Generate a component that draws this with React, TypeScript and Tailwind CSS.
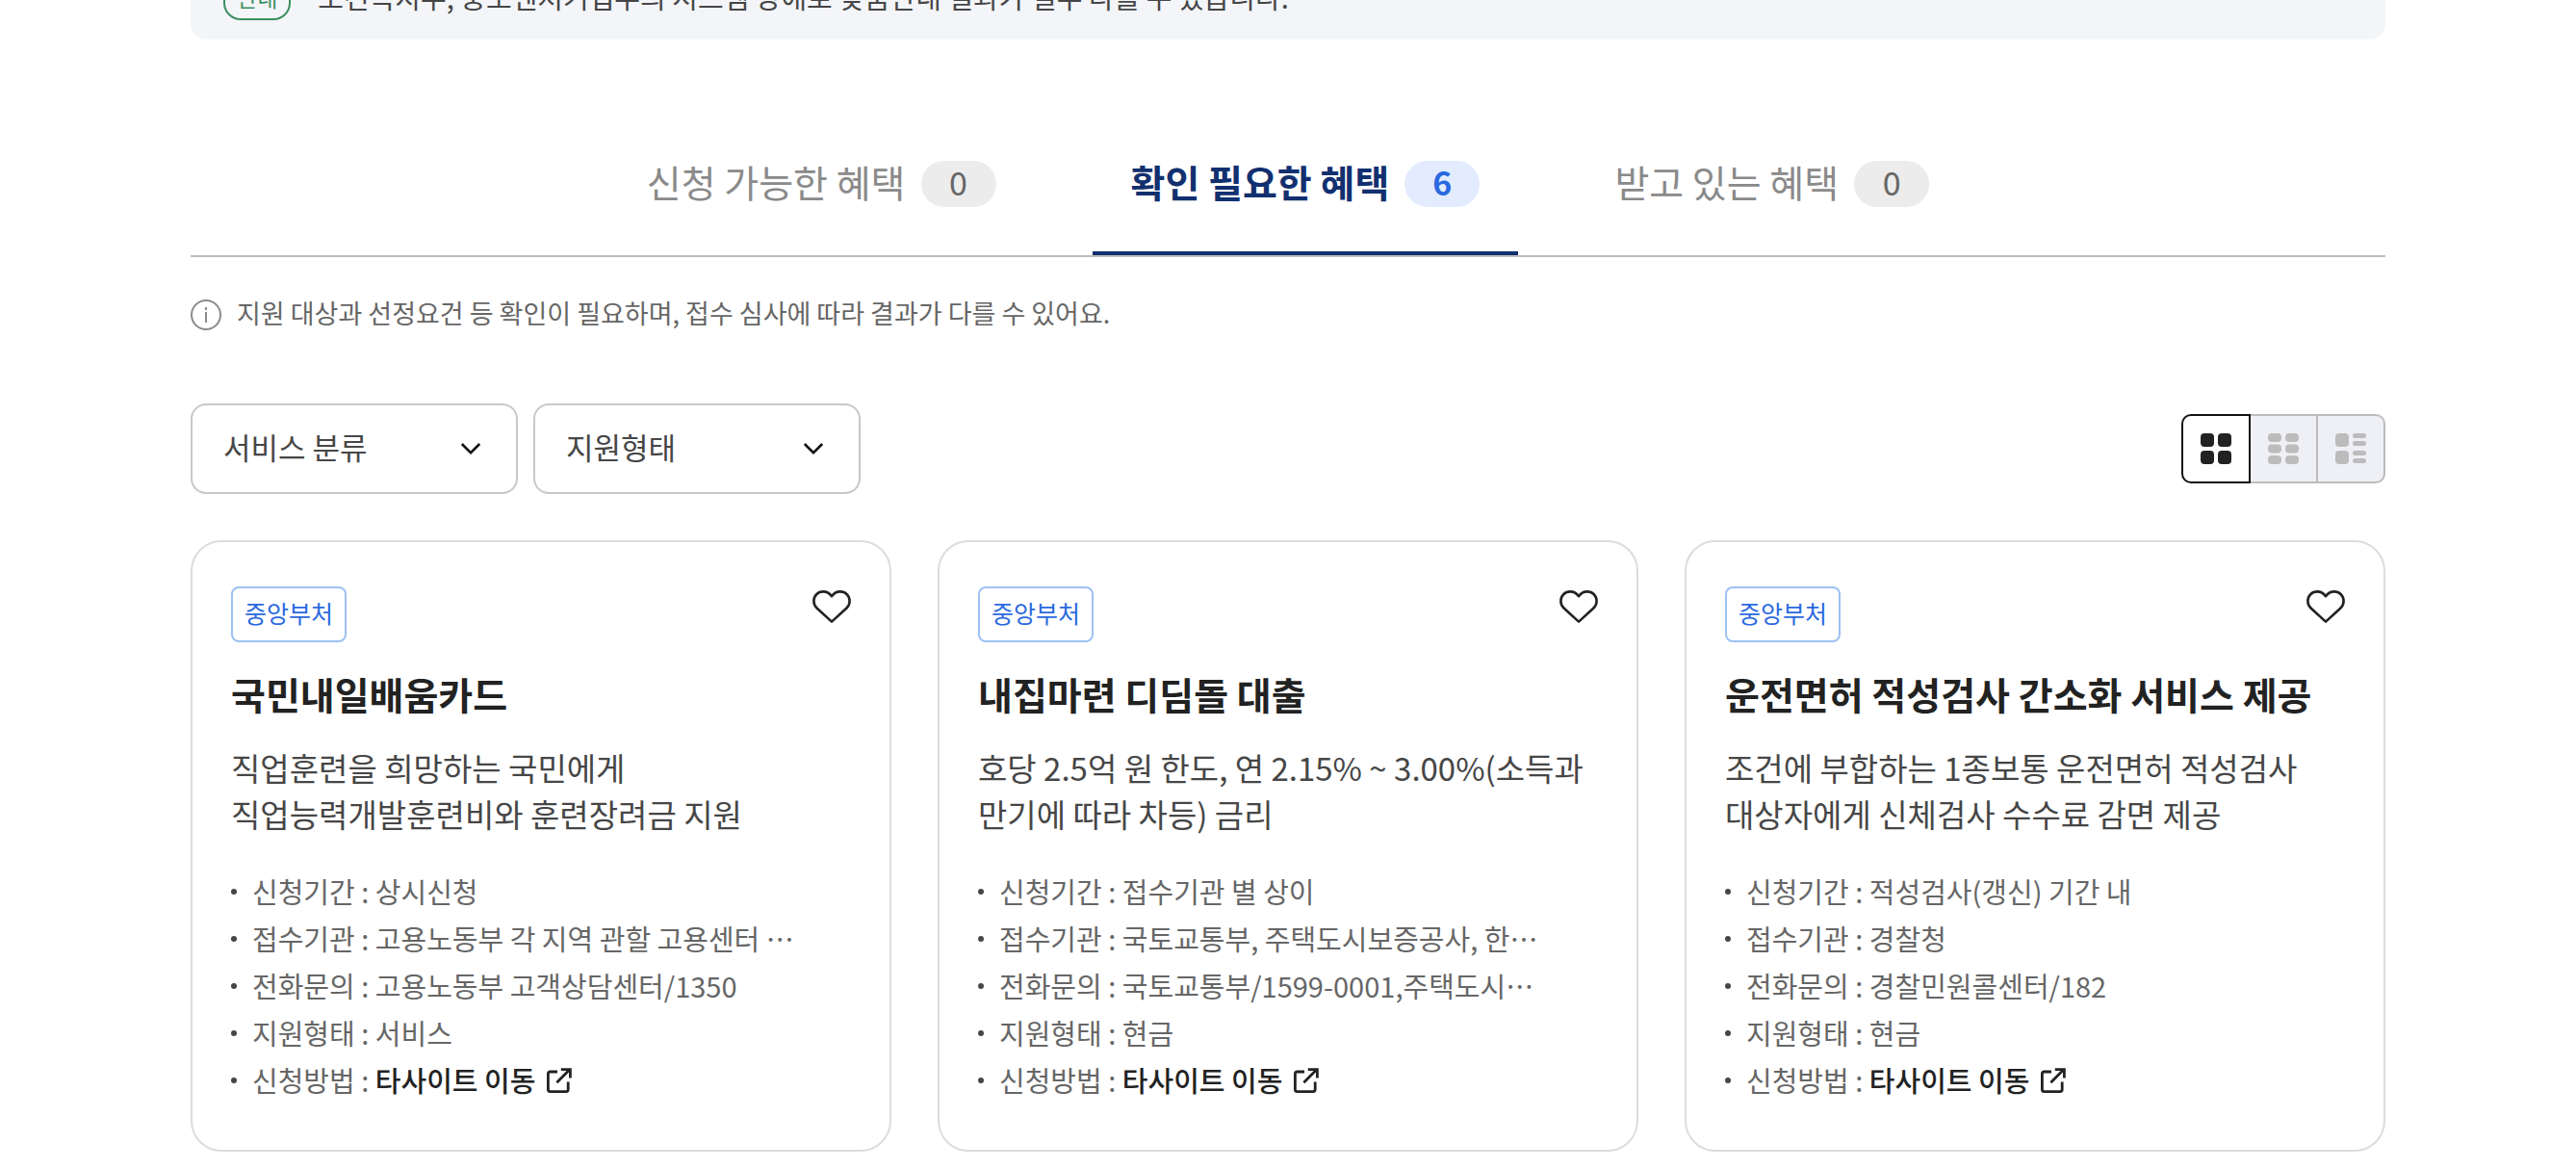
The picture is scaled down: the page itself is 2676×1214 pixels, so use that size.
import React, { useState } from 'react';

const tabs = [
    { id: 'available', label: '신청 가능한 혜택', count: 0 },
    { id: 'check', label: '확인 필요한 혜택', count: 6 },
    { id: 'receiving', label: '받고 있는 혜택', count: 0 },
];

const filters = [
    { id: 'category', label: '서비스 분류' },
    { id: 'supportType', label: '지원형태' },
];

const benefits = [
    {
        id: 1,
        org: '중앙부처',
        title: '국민내일배움카드',
        desc: '직업훈련을 희망하는 국민에게 직업능력개발훈련비와 훈련장려금 지원',
        period: '상시신청',
        agency: '고용노동부 각 지역 관할 고용센터 …',
        phone: '고용노동부 고객상담센터/1350',
        type: '서비스',
    },
    {
        id: 2,
        org: '중앙부처',
        title: '내집마련 디딤돌 대출',
        desc: '호당 2.5억 원 한도, 연 2.15% ~ 3.00%(소득과 만기에 따라 차등) 금리',
        period: '접수기관 별 상이',
        agency: '국토교통부, 주택도시보증공사, 한…',
        phone: '국토교통부/1599-0001,주택도시…',
        type: '현금',
    },
    {
        id: 3,
        org: '중앙부처',
        title: '운전면허 적성검사 간소화 서비스 제공',
        desc: '조건에 부합하는 1종보통 운전면허 적성검사 대상자에게 신체검사 수수료 감면 제공',
        period: '적성검사(갱신) 기간 내',
        agency: '경찰청',
        phone: '경찰민원콜센터/182',
        type: '현금',
    },
];

function InfoIcon() {
    return (
        <svg className="mt-1 w-8 h-8 shrink-0 text-[#8a8a8a]" viewBox="0 0 32 32" fill="none" stroke="currentColor" aria-hidden="true">
            <circle cx="16" cy="16" r="15" strokeWidth="2" />
            <path d="M16 13v11" strokeWidth="2" />
            <path d="M16 8v3" strokeWidth="2" />
        </svg>
    );
}

function HeartIcon() {
    return (
        <svg className="w-10 h-[34px]" viewBox="0 0 40 34" fill="none" stroke="currentColor" strokeWidth="2.6" strokeLinejoin="round" aria-hidden="true">
            <path d="M20 6.2C17.6 2.9 14.6 1.4 11.2 1.4C5.6 1.4 1.4 5.7 1.4 11.2C1.4 14.4 2.6 16.6 4.8 18.7L20 32.6L35.2 18.7C37.4 16.6 38.6 14.4 38.6 11.2C38.6 5.7 34.4 1.4 28.8 1.4C25.4 1.4 22.4 2.9 20 6.2Z" />
        </svg>
    );
}

function ExternalIcon() {
    return (
        <svg className="w-[26px] h-[26px]" viewBox="0 0 26 26" fill="none" stroke="currentColor" strokeWidth="2.8" aria-hidden="true">
            <path d="M11 4H3.4A2 2 0 0 0 1.4 6V22.6A2 2 0 0 0 3.4 24.6H20.2A2 2 0 0 0 22.2 22.6V14.4" />
            <path d="M10.4 15.2L24 1.6M14.8 1.6H24.4V10.6" />
        </svg>
    );
}

function ChevronIcon() {
    return (
        <svg className="pointer-events-none absolute right-[38px] top-1/2 -translate-y-1/2 w-[22px] h-[14px] text-[#111]" viewBox="0 0 22 14" fill="none" stroke="currentColor" strokeWidth="2.5" aria-hidden="true">
            <path d="M1.8 2L11 11.2L20.2 2" />
        </svg>
    );
}

const views = [
    {
        id: 'grid',
        label: '바둑판형',
        icon: (
            <svg className="w-8 h-8" viewBox="0 0 32 32" fill="currentColor" aria-hidden="true">
                <rect width="14" height="14" rx="4" />
                <rect x="18" width="14" height="14" rx="4" />
                <rect y="18" width="14" height="14" rx="4" />
                <rect x="18" y="18" width="14" height="14" rx="4" />
            </svg>
        ),
    },
    {
        id: 'compact',
        label: '간략형',
        icon: (
            <svg className="w-8 h-8" viewBox="0 0 32 32" fill="currentColor" aria-hidden="true">
                <rect width="14" height="9" rx="4" />
                <rect x="18" width="14" height="9" rx="4" />
                <rect y="11.5" width="14" height="9" rx="4" />
                <rect x="18" y="11.5" width="14" height="9" rx="4" />
                <rect y="23" width="14" height="9" rx="4" />
                <rect x="18" y="23" width="14" height="9" rx="4" />
            </svg>
        ),
    },
    {
        id: 'list',
        label: '목록형',
        icon: (
            <svg className="w-8 h-8" viewBox="0 0 32 32" fill="currentColor" aria-hidden="true">
                <rect width="14" height="14" rx="4" />
                <rect y="18" width="14" height="14" rx="4" />
                <rect x="18" width="14" height="5" rx="2.5" />
                <rect x="18" y="8" width="14" height="5" rx="2.5" />
                <rect x="18" y="18" width="14" height="5" rx="2.5" />
                <rect x="18" y="26" width="14" height="5" rx="2.5" />
            </svg>
        ),
    },
];

function Row({ label, children }: { label: string; children: React.ReactNode }) {
    return (
        <li className="flex items-center gap-4">
            <span className="w-[6px] h-[6px] shrink-0 rounded-full bg-[#464646]" />
            <span className="whitespace-nowrap">
                {label} : {children}
            </span>
        </li>
    );
}

function BenefitCard({ item }: { item: any }) {
    return (
        <article className="rounded-[32px] border-2 border-[#dcdcdc] bg-white px-10 pt-[46px] pb-12">
            <div className="flex items-start justify-between">
                <span className="rounded-lg border-2 border-[#9dc1f3] px-3 pb-1 text-[25px] leading-[50px] text-[#2a69e0]">
                    {item.org}
                </span>
                <button type="button" aria-label="관심 서비스 등록" className="mt-1 text-[#222]">
                    <HeartIcon />
                </button>
            </div>
            <h3 className="mt-6 text-[39px] leading-[58px] font-bold text-[#222]">{item.title}</h3>
            <p className="mt-6 text-[33px] leading-[48px] text-[#464646] break-keep">{item.desc}</p>
            <ul className="mt-8 text-[29px] leading-[49px] text-[#666]">
                <Row label="신청기간">{item.period}</Row>
                <Row label="접수기관">{item.agency}</Row>
                <Row label="전화문의">{item.phone}</Row>
                <Row label="지원형태">{item.type}</Row>
                <Row label="신청방법">
                    <a href="#" className="inline-flex items-center gap-3 font-medium text-[#222]">
                        타사이트 이동
                        <ExternalIcon />
                    </a>
                </Row>
            </ul>
        </article>
    );
}

export default function App() {
    const [activeTab, setActiveTab] = useState('check');
    const [view, setView] = useState('grid');

    return (
        <div className="overflow-hidden bg-white font-['Noto_Sans_CJK_KR',sans-serif]">
            <main className="mx-auto w-full max-w-[2280px] pb-4">
                {/* Notice */}
                <div className="-mt-[47px] flex h-[88px] items-center gap-[28px] rounded-2xl bg-[#f3f5f9] pl-[34px]">
                    <span className="rounded-[18px] border-2 border-[#3c8f60] px-3 text-[23px] leading-[44px] text-[#3c8f60]">안내</span>
                    <p className="text-[29px] text-[#464646]">
                        보건복지부, 중소벤처기업부의 시스템 장애로 맞춤안내 결과가 일부 다를 수 있습니다.
                    </p>
                </div>

                {/* Tabs */}
                <div role="tablist" className="mt-[86px] flex justify-center gap-[60px] border-b-2 border-[#bdbdbd]">
                    {tabs.map((tab) => {
                        const active = tab.id === activeTab;
                        return (
                            <button
                                key={tab.id}
                                type="button"
                                role="tab"
                                aria-selected={active}
                                onClick={() => setActiveTab(tab.id)}
                                className={`flex items-start gap-4 border-b-4 px-10 pt-10 pb-[46px] text-[39px] leading-[42px] ${active ? 'border-[#12306f] font-bold text-[#12306f]' : 'border-transparent text-[#8a8a8a]'}`}
                            >
                                {tab.label}
                                <span
                                    className={`w-[78px] h-12 rounded-full text-center text-[34px] leading-[44px] ${active ? 'bg-[#e3ecff] font-bold text-[#2a69e0]' : 'bg-[#ececec] text-[#666]'}`}
                                >
                                    {tab.count}
                                </span>
                            </button>
                        );
                    })}
                </div>

                <div className="mt-10 flex items-start gap-4 text-[#666]">
                    <InfoIcon />
                    <p className="text-[27px] leading-[36px]">
                        지원 대상과 선정요건 등 확인이 필요하며, 접수 심사에 따라 결과가 다를 수 있어요.
                    </p>
                </div>

                {/* Filters */}
                <div className="mt-[76px] flex items-center justify-between">
                    <div className="flex gap-4">
                        {filters.map((filter) => (
                            <div key={filter.id} className="relative w-[340px]">
                                <select
                                    aria-label={filter.label}
                                    className="h-[94px] w-full appearance-none rounded-2xl border-2 border-[#c8c8c8] bg-white pl-8 pb-1 text-[31px] text-[#464646]"
                                >
                                    <option>{filter.label}</option>
                                </select>
                                <ChevronIcon />
                            </div>
                        ))}
                    </div>
                    <div className="flex">
                        {views.map((v) => (
                            <button
                                key={v.id}
                                type="button"
                                aria-label={v.label}
                                aria-pressed={v.id === view}
                                onClick={() => setView(v.id)}
                                className={`flex h-[72px] items-center justify-center border-y-2 border-r-2 first:w-[72px] first:rounded-l-[10px] first:border-l-2 last:rounded-r-[10px] w-[70px] ${v.id === view ? 'border-[#111] bg-white text-[#222]' : 'border-[#bcbcbc] bg-[#eff0f5] text-[#bcbcbc]'}`}
                            >
                                {v.icon}
                            </button>
                        ))}
                    </div>
                </div>

                {/* Benefit cards */}
                <div className="mt-12 grid grid-cols-3 gap-12">
                    {benefits.map((item) => (
                        <BenefitCard key={item.id} item={item} />
                    ))}
                </div>
            </main>
        </div>
    );
}
